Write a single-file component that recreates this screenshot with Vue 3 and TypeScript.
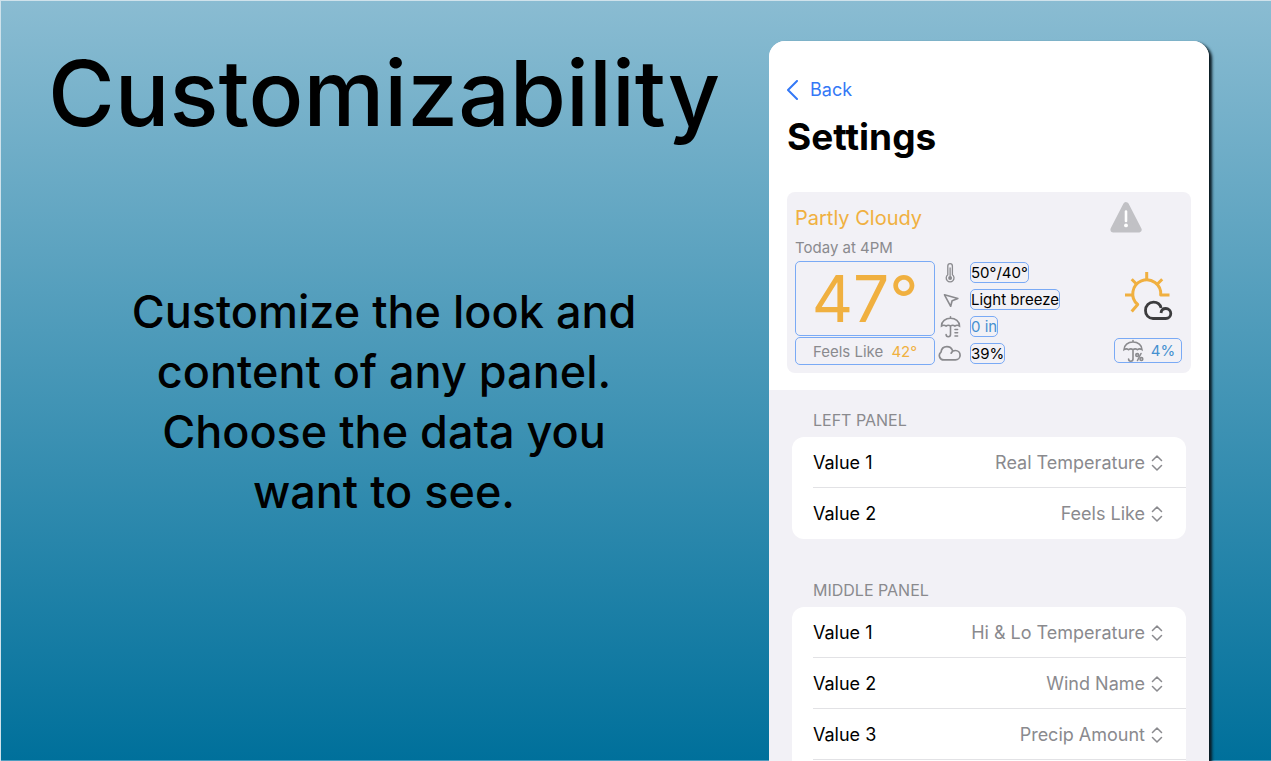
<script setup lang="ts">
interface Setting {
  label: string
  value: string
  options: string[]
}

interface Section {
  id: string
  title: string
  settings: Setting[]
  continues?: boolean
}

const options = ['Real Temperature', 'Feels Like', 'Hi & Lo Temperature', 'Wind Name', 'Precip Amount']

const sections: Section[] = [
  {
    id: 'left',
    title: 'LEFT PANEL',
    settings: [
      { label: 'Value 1', value: 'Real Temperature', options },
      { label: 'Value 2', value: 'Feels Like', options },
    ],
  },
  {
    id: 'middle',
    title: 'MIDDLE PANEL',
    continues: true,
    settings: [
      { label: 'Value 1', value: 'Hi & Lo Temperature', options },
      { label: 'Value 2', value: 'Wind Name', options },
      { label: 'Value 3', value: 'Precip Amount', options },
    ],
  },
]
</script>

<template>
  <main class="page">
    <section class="promo">
      <h1>Customizability</h1>
      <p>Customize the look and content of any panel. Choose the data you want to see.</p>
    </section>

    <section class="phone">
      <header class="top">
        <a class="back" href="#">
          <svg width="12" height="20" viewBox="0 0 12 20" fill="none" stroke="currentColor" stroke-width="2" stroke-linecap="round" stroke-linejoin="round"><path d="M10 1 1 10 10 19" /></svg>
          <span>Back</span>
        </a>
        <h2>Settings</h2>

        <article class="card">
          <div class="card-head">
            <div>
              <h3>Partly Cloudy</h3>
              <p class="date">Today at 4PM</p>
            </div>
            <svg class="alert" width="32" height="31" viewBox="0 0 32 31">
              <path d="M16 3.2 28.6 27.6H3.4Z" fill="#c1c1c5" stroke="#c1c1c5" stroke-width="6" stroke-linejoin="round" />
              <path d="M16 9.5v9.5" stroke="#fff" stroke-width="2.6" stroke-linecap="round" />
              <circle cx="16" cy="23.4" r="1.9" fill="#fff" />
            </svg>
          </div>
          <div class="card-body">
            <div class="temps">
              <button class="slot big" type="button">47°</button>
              <button class="slot feels" type="button">Feels Like <b>42°</b></button>
            </div>
            <ul class="values">
              <li>
                <svg width="26" height="22" viewBox="0 0 26 22" fill="none" stroke="#8a8a8e" stroke-width="1.300">
                  <path d="M9.800 12.800V4a2.300 2.300 0 0 1 4.600 0v8.800a3.900 3.900 0 1 1-4.600 0Z" />
                  <circle cx="12.100" cy="16" r="2" fill="#8a8a8e" stroke="none" />
                  <path d="M12.100 5.500v9" />
                </svg>
                <button class="slot" type="button">50°/40°</button>
              </li>
              <li>
                <svg width="26" height="22" viewBox="0 0 26 22" fill="none" stroke="#8a8a8e" stroke-width="1.6" stroke-linejoin="round"><path d="m6.500 5.800 13.400 3.600-5.800 2.300-1.400 5.600Z" /></svg>
                <button class="slot" type="button">Light breeze</button>
              </li>
              <li>
                <svg width="26" height="22" viewBox="0 0 26 22" fill="none" stroke="#8a8a8e" stroke-width="1.6" stroke-linecap="round">
                  <path d="M12.500 .8v1.500M3.500 10C3.500 5.500 7.500 2.300 12.500 2.300s9 3.200 9 7.700q-2.400-1.600-4.600 0-2.200-1.600-4.400 0-2.200-1.600-4.400 0-2.200-1.600-4.600 0ZM12.500 10v8.600a2.200 2.200 0 0 1-4.400 0" />
                  <path d="M17 13.500h2.600M17 16.800h2.600M17 20h2.600" />
                </svg>
                <button class="slot blue" type="button">0 in</button>
              </li>
              <li>
                <svg width="26" height="22" viewBox="0 0 26 22" fill="none" stroke="#8a8a8e" stroke-width="1.7" stroke-linecap="round" stroke-linejoin="round"><path d="M13.200 10.200c.8-1.800 2.300-2.700 4.200-2.700a4.700 4.700 0 0 1 0 9.400H6a4.400 4.400 0 0 1-3-7.800C3.400 5.900 5.700 3.600 8.900 3.600c2.600 0 4.700 1.400 5.600 3.900" /></svg>
                <button class="slot" type="button">39%</button>
              </li>
            </ul>
            <div class="sky">
              <svg width="50" height="52" viewBox="0 0 50 52" fill="none" stroke-linejoin="round">
                <g stroke="#f0b040" stroke-width="3">
                  <path d="m8.700 41.500 6-7A14 14 0 1 1 37.700 25h8.800" />
                  <path d="M23.700 2v9M2 25h8M8.700 9.200l5.500 5.500M39.200 9.200l-5.500 5.500" />
                </g>
                <path d="M38 43c.3-3 2.200-4.500 4.800-4.500a5 5 0 0 1 0 10H30a7.600 7.600 0 0 1-7.500-8c0-5 3.500-8.300 8-8.300 3.700 0 6.700 2.200 7.600 5.800" stroke="#3c3c3e" stroke-width="2.800" />
              </svg>
              <button class="slot chance" type="button">
                <svg width="24" height="24" viewBox="0 0 24 24" fill="none" stroke="#8a8a8e" stroke-width="1.6" stroke-linecap="round">
                  <path d="M12 1.500V3M3 10.700C3 6.200 7 3 12 3s9 3.200 9 7.700q-2.400-1.600-4.600 0-2.200-1.600-4.400 0-2.200-1.600-4.400 0-2.200-1.600-4.600 0ZM12 10.500v9.600a2.200 2.200 0 0 1-4.400 0" />
                  <path d="m20 14.500-3.500 7" />
                  <circle cx="16.200" cy="16" r="1.400" /><circle cx="20.400" cy="20" r="1.400" />
                </svg>
                <span>4%</span>
              </button>
            </div>
          </div>
        </article>
      </header>

      <div class="form">
        <section v-for="section in sections" :key="section.id" class="group">
          <h4>{{ section.title }}</h4>
          <div class="list" :class="{ continues: section.continues }">
            <div v-for="(setting, i) in section.settings" :key="setting.label" class="row">
              <label :for="`${section.id}-${i}`">{{ setting.label }}</label>
              <select :id="`${section.id}-${i}`" :value="setting.value">
                <option v-for="option in setting.options" :key="option" :value="option">{{ option }}</option>
              </select>
              <svg width="12" height="16" viewBox="0 0 12 16" fill="none" stroke="#8a8a8e" stroke-width="1.500" stroke-linecap="round" stroke-linejoin="round"><path d="m1.500 5.500 4.500-4.500 4.500 4.500M1.500 10.500 6 15l4.500-4.500" /></svg>
            </div>
          </div>
        </section>
      </div>
    </section>
  </main>
</template>

<style>
body {
  margin: 0;
}
</style>

<style scoped>
* {
  box-sizing: border-box;
}

.page {
  display: grid;
  grid-template-columns: minmax(0, 1fr) minmax(440px, 34.6%);
  gap: 2px;
  height: 100vh;
  padding: 40px 62px 0 0;
  overflow: hidden;
  border: solid #cfe2eb;
  border-width: 1px 0 0 1px;
  background:
    linear-gradient(#4c9cbf, #4c9cbf) bottom / 100% 1px no-repeat,
    linear-gradient(#8abcd2, #00709b);
  color: #000;
  font-family: Inter, "Liberation Sans", sans-serif;
}

h1,
h2,
h3,
h4,
p,
ul {
  margin: 0;
  padding: 0;
  font-weight: 400;
}

.promo {
  text-align: center;
}

.promo h1 {
  font-size: 91px;
  font-weight: 500;
  line-height: 104px;
}

.promo p {
  max-width: 520px;
  margin: 137px auto 0;
  font-size: 45px;
  font-weight: 500;
  line-height: 60px;
}

.phone {
  display: flex;
  flex-direction: column;
  overflow: hidden;
  border-radius: 16px 16px 0 0;
  background: #f2f1f6;
  box-shadow: 3px 2px 3px #0a1a22;
}

.top {
  padding: 37px 18px 17px;
  background: #fff;
}

.back {
  display: flex;
  align-items: center;
  gap: 11px;
  color: #3478f6;
  font-size: 18px;
  line-height: 24px;
  text-decoration: none;
}

.top h2 {
  margin-top: 11px;
  font-size: 37px;
  font-weight: 700;
  line-height: 48px;
}

.card {
  margin-top: 31px;
  padding: 10px 9px 8px 8px;
  border-radius: 8px;
  background: #f2f1f6;
}

.card-head {
  display: flex;
  justify-content: space-between;
}

.card h3 {
  color: #f0b040;
  font-size: 20px;
  line-height: 32px;
}

.date {
  color: #8a8a8e;
  font-size: 15px;
  line-height: 27px;
}

.alert {
  margin-right: 40px;
}

.card-body {
  display: flex;
}

.temps {
  display: grid;
  grid-template-rows: 75px 28px;
  gap: 1px;
  width: 140px;
}

.slot {
  margin: 0;
  padding: 0;
  border: 1px solid #7aaaf5;
  border-radius: 5px;
  background: none;
  color: #000;
  font: inherit;
  font-size: 15px;
  line-height: 19px;
}

.slot.big {
  color: #f0b040;
  font-size: 64px;
  line-height: 72px;
}

.slot.feels {
  color: #8a8a8e;
}

.slot b {
  margin-left: 4px;
  color: #f0b040;
  font-weight: 400;
}

.slot.blue,
.slot.chance {
  color: #4590d0;
}

.values {
  display: grid;
  align-content: start;
  gap: 6px;
  padding: 1px 0 0 3px;
  list-style: none;
}

.values li {
  display: flex;
  gap: 6px;
  height: 21px;
}

.sky {
  display: flex;
  flex-direction: column;
  align-items: center;
  justify-content: flex-end;
  gap: 16px;
  width: 68px;
  margin: 0 0 2px auto;
}

.slot.chance {
  display: flex;
  align-items: center;
  justify-content: center;
  gap: 6px;
  width: 68px;
  height: 25px;
}

.form {
  padding: 15px 23px 0;
}

.group h4 {
  padding: 0 0 2px 21px;
  color: #8a8a8e;
  font-size: 16px;
  line-height: 30px;
}

.group + .group {
  margin-top: 36px;
}

.list {
  overflow: hidden;
  border-radius: 12px;
  background: #fff;
}

.list.continues {
  padding-bottom: 12px;
}

.row {
  display: flex;
  align-items: center;
  gap: 6px;
  height: 51px;
  margin-left: 21px;
  padding: 1px 23px 0 0;
  border-bottom: 1px solid #e2e2e5;
  font-size: 18px;
}

.list:not(.continues) .row:last-child {
  border-bottom-color: transparent;
}

.row select {
  flex: 1;
  min-width: 0;
  padding: 0;
  border: 0;
  appearance: none;
  background: none;
  color: #8a8a8e;
  font: inherit;
  text-align: right;
  text-align-last: right;
}
</style>
